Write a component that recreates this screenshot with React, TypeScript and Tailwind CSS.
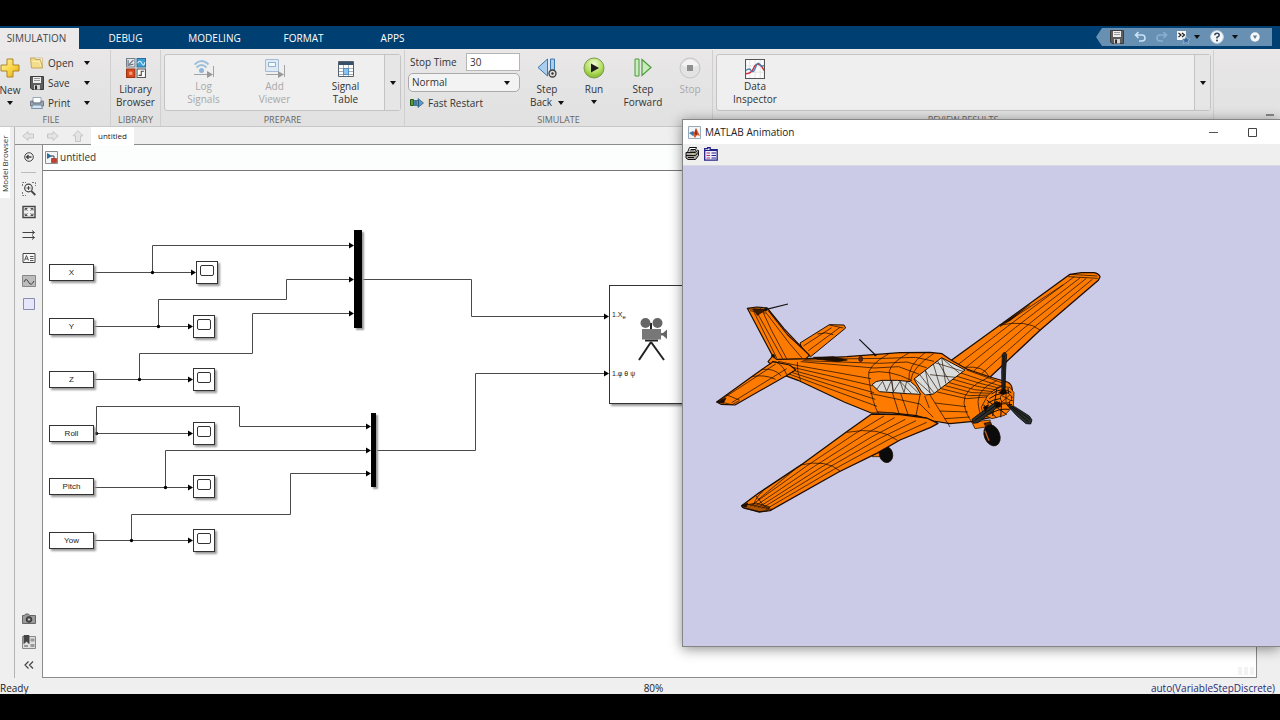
import type { ReactNode } from "react"
import { clsx } from "clsx"

type Point = [number, number]

const TABS = ["DEBUG", "MODELING", "FORMAT", "APPS"]

const SOURCES = [
  { label: "X", pos: "left-[6px] top-[93px]" },
  { label: "Y", pos: "left-[6px] top-[147px]" },
  { label: "Z", pos: "left-[6px] top-[200px]" },
  { label: "Roll", pos: "left-[6px] top-[254px]" },
  { label: "Pitch", pos: "left-[6px] top-[307px]" },
  { label: "Yow", pos: "left-[6px] top-[361px]" },
]

const SCOPES = [
  "left-[153px] top-[90px]",
  "left-[150px] top-[144px]",
  "left-[150px] top-[197px]",
  "left-[150px] top-[251px]",
  "left-[150px] top-[304px]",
  "left-[150px] top-[358px]",
]

const WIRES = [
  "M51 101.5H150",
  "M109.5 101.5V74.5H307",
  "M51 155.5H146",
  "M115.5 155.5V128.5H243.5V108.5H307",
  "M51 208.5H146",
  "M96.5 208.5V182.5H209.5V142.5H307",
  "M51 262.5H146",
  "M53.5 262.5V235.5H196.5V255.5H324",
  "M51 316.5H146",
  "M122.5 316.5V279.5H324",
  "M51 369.5H146",
  "M88.5 369.5V343.5H247.5V302.5H324",
  "M319 108.5H428.5V145.5H562",
  "M333 279.5H432.5V202.5H562",
]

const ARROWS: Point[] = [
  [153, 101.5], [150, 155.5], [150, 208.5], [150, 262.5], [150, 316.5], [150, 369.5],
  [311, 74.5], [311, 108.5], [311, 142.5],
  [328, 255.5], [328, 279.5], [328, 302.5],
  [566, 145.5], [566, 202.5],
]

const JUNCTIONS: Point[] = [
  [109.5, 101.5], [115.5, 155.5], [96.5, 208.5], [53.5, 262.5], [122.5, 316.5], [88.5, 369.5],
]

// Lines running through a series of cross sections, spread evenly between their end points.
function loft(sections: [Point, Point][], count: number) {
  let d = ""
  for (let i = 1; i <= count; i++) {
    const t = i / (count + 1)
    sections.forEach(([a, b], s) => {
      const x = Math.round(a[0] + (b[0] - a[0]) * t)
      const y = Math.round(a[1] + (b[1] - a[1]) * t)
      d += `${s === 0 ? "M" : "L"}${x} ${y}`
    })
  }
  return d
}

function Caret({ className }: { className?: string }) {
  return (
    <svg viewBox="0 0 6 4" className={clsx("h-1 w-1.5 shrink-0", className)} aria-hidden="true">
      <path d="M0 0h6L3 4z" fill="#111" />
    </svg>
  )
}

function NewIcon() {
  return (
    <svg viewBox="0 0 20 20" className="size-5" aria-hidden="true">
      <defs>
        <linearGradient id="plus" x1="0" y1="0" x2="1" y2="1">
          <stop offset="0" stopColor="#fff7a8" />
          <stop offset=".6" stopColor="#f8d23c" />
          <stop offset="1" stopColor="#dca01c" />
        </linearGradient>
      </defs>
      <path d="M7 1h6v6h6v6h-6v6H7v-6H1V7h6z" fill="url(#plus)" stroke="#b08428" />
    </svg>
  )
}

function FolderIcon() {
  return (
    <svg viewBox="0 0 14 12" className="h-3 w-3.5" aria-hidden="true">
      <path d="M4 1h8.500v9H5z" fill="#fdfdfd" stroke="#c9b780" strokeWidth=".8" />
      <path d="M.5 1h4l1 1.500H10.500l2 8.500H1.500z" fill="#f3dc8b" stroke="#b99745" strokeWidth=".8" />
      <path d="M2.500 4.500h7l1.500 5" fill="none" stroke="#fff3c0" strokeWidth=".8" />
    </svg>
  )
}

function SaveIcon() {
  return (
    <svg viewBox="0 0 14 14" className="size-3.5" aria-hidden="true">
      <path d="M.5.500h13v13H2l-1.500-1.500z" fill="#5d5d5d" stroke="#3c3c3c" />
      <path d="M3 1h8v6H3z" fill="#eee" />
      <path d="M4 2.500h6M4 4.500h6" stroke="#999" />
      <path d="M4 9h6v4.500H4z" fill="#d4d4d4" />
      <path d="M5 9.500h2v4H5z" fill="#2c2c2c" />
    </svg>
  )
}

function PrintIcon() {
  return (
    <svg viewBox="0 0 14 12" className="h-3 w-3.5" aria-hidden="true">
      <path d="M3 .5h8V6H3z" fill="#fff" stroke="#8297a8" strokeWidth=".8" />
      <path d="M.5 4.500Q.5 4 1 4h2v2h8V4h2q.5 0 .5.500V9h-13z" fill="#9aa6b2" stroke="#5d6a77" strokeWidth=".8" />
      <path d="M2.500 8h9l1 3.500h-11z" fill="#cfe4f5" stroke="#6a7d90" strokeWidth=".8" />
    </svg>
  )
}

function LibraryIcon() {
  return (
    <svg viewBox="0 0 19 19" className="size-5" aria-hidden="true">
      <path d="M.5.500h8v8h-8z" fill="#e4e7ea" stroke="#77808a" />
      <path d="M2 2v5l5-1M3 6l4-4" fill="none" stroke="#5f6c78" />
      <path d="M10.500.500h8v8h-8z" fill="#3da0d4" stroke="#2b6f98" />
      <path d="M11 5q2-4 4 0t3-1" fill="none" stroke="#d4f0ff" />
      <path d="M.5 10.500h8v8h-8z" fill="#d8491c" stroke="#9a3213" />
      <path d="M3 13h3v3H3z" fill="#f0a080" />
      <path d="M10.500 10.500h8v8h-8z" fill="#fafafa" stroke="#555" />
      <path d="M12 16.500h2.500v-4H17" fill="none" stroke="#444" />
    </svg>
  )
}

function LogSignalsIcon() {
  return (
    <svg viewBox="0 0 20 20" className="size-5" aria-hidden="true">
      <g fill="none" stroke="#9dbfdb" strokeWidth="1.800">
        <path d="M.5 5.500q7-7 14 0M2.500 8.500q5-5 10 0" />
      </g>
      <circle cx="7.500" cy="11.500" r="2.500" fill="#8fb6d8" />
      <path d="M0 15.500h14M19.500 7v11" stroke="#a3a3a3" />
      <path d="M13 12l6 3.500-6 3.500z" fill="#999" />
    </svg>
  )
}

function AddViewerIcon() {
  return (
    <svg viewBox="0 0 20 20" className="size-5" aria-hidden="true">
      <path d="M.5.500h13v12H.5z" fill="#dfeaf4" stroke="#a5bdd2" />
      <path d="M3.500 3.500h7v4h-7z" fill="#f5faff" stroke="#8fb0cf" />
      <path d="M1 15.500h13M19.500 6v12" stroke="#a3a3a3" />
      <path d="M13 12l6 3.500-6 3.500z" fill="#999" />
    </svg>
  )
}

function SignalTableIcon() {
  return (
    <svg viewBox="0 0 16 16" className="size-4" aria-hidden="true">
      <path d="M.5.500h15v15H.5z" fill="#fff" stroke="#56616b" />
      <path d="M1 1h14v3H1z" fill="#35506b" />
      <path d="M1 7.500h14M1 10.500h14M1 13.500h14M5.500 4v11M10.500 4v11" stroke="#8d9aa6" strokeWidth=".8" />
      <path d="M5.500 7.500h5v6h-5z" fill="#8cc4f0" stroke="#3f83bd" strokeWidth=".8" />
    </svg>
  )
}

function StepBackIcon() {
  return (
    <svg viewBox="0 0 20 20" className="size-5" aria-hidden="true">
      <path d="M1 9.500L10.500 1v17z" fill="#a9cdec" stroke="#3f78ac" />
      <path d="M13.500 1h4v14h-4z" fill="#a9cdec" stroke="#3f78ac" />
      <circle cx="15.500" cy="15.500" r="3.500" fill="#ddd" stroke="#3c3c3c" strokeWidth="1.300" />
      <circle cx="15.500" cy="15.500" r="1.200" fill="#333" />
    </svg>
  )
}

function RunIcon() {
  return (
    <svg viewBox="0 0 22 22" className="size-[22px]" aria-hidden="true">
      <defs>
        <radialGradient id="run" cx=".5" cy=".3" r=".7">
          <stop offset="0" stopColor="#f2fbd8" />
          <stop offset=".6" stopColor="#b5df62" />
          <stop offset="1" stopColor="#7fb52a" />
        </radialGradient>
      </defs>
      <circle cx="11" cy="11" r="10" fill="url(#run)" stroke="#7a9c4c" />
      <path d="M8 6.500l8 4.500-8 4.500z" fill="#1c1c1c" />
    </svg>
  )
}

function StepForwardIcon() {
  return (
    <svg viewBox="0 0 19 20" className="size-5" aria-hidden="true">
      <path d="M1.500 1h4v17h-4z" fill="#cdebc0" stroke="#4c9a3a" />
      <path d="M8.500 1.500L17.500 9.500l-9 8z" fill="#c9eabb" stroke="#4c9a3a" strokeWidth="1.200" />
    </svg>
  )
}

function StopIcon() {
  return (
    <svg viewBox="0 0 22 22" className="size-[22px]" aria-hidden="true">
      <circle cx="11" cy="11" r="10" fill="#e3e3e3" stroke="#c4c4c4" />
      <path d="M2.500 8q8.500-11 17 0-8 4-17 0z" fill="#f4f4f4" />
      <path d="M8 8h6v6H8z" fill="#8f8f8f" />
    </svg>
  )
}

function FastRestartIcon() {
  return (
    <svg viewBox="0 0 14 10" className="h-2.5 w-3.5" aria-hidden="true">
      <path d="M.5 1.500h3v6h-3z" fill="#5a9a3c" stroke="#2c5a1c" />
      <path d="M4 2.500h4V.5L13.500 5 8 9.500v-2H4z" fill="#5c9bc9" stroke="#3a6486" strokeWidth=".8" />
      <path d="M6 3v4M8.500 2v6" stroke="#21445f" strokeWidth=".8" />
    </svg>
  )
}

function InspectorIcon() {
  return (
    <svg viewBox="0 0 19 19" className="size-5" aria-hidden="true">
      <path d="M.5.500h18v18H.5z" fill="#fcfcfc" stroke="#555" />
      <path d="M4.500 1v17M9.500 1v17M14.500 1v17M1 6.500h17M1 12.500h17" stroke="#ddd" strokeWidth=".7" />
      <path d="M1 14q5 0 7-5t5-4 5 6" fill="none" stroke="#c8283c" strokeWidth="1.300" />
      <path d="M1 11q3-3 5 0t4-3 4-3 4 1" fill="none" stroke="#4a7fb0" strokeWidth="1.300" />
    </svg>
  )
}

function ToolButton({
  icon,
  lines,
  menu,
  disabled,
  compact,
  className,
}: {
  icon: ReactNode
  lines: string[]
  menu?: boolean
  disabled?: boolean
  compact?: boolean
  className?: string
}) {
  return (
    <button
      type="button"
      disabled={disabled}
      className={clsx(
        "flex flex-col items-center pt-[3px] text-[10px] leading-[13px]",
        disabled ? "text-[#a8a8a8]" : "text-[#333]",
        className,
      )}
    >
      <span className={clsx("flex h-[22px] items-center justify-center", !compact && "mb-1")}>{icon}</span>
      {lines.map((line, i) => (
        <span key={line} className="flex items-center gap-1.5 whitespace-nowrap">
          {line}
          {menu && i === lines.length - 1 && lines.length > 1 && <Caret />}
        </span>
      ))}
      {menu && lines.length === 1 && <Caret className="mt-1" />}
    </button>
  )
}

function Section({ label, className, children }: { label: string; className?: string; children: ReactNode }) {
  return (
    <section className={clsx("flex flex-col border-r border-[#cfcfcf]", className)}>
      <div className="flex h-[63px] shrink-0 pt-1">{children}</div>
      <p className="shrink-0 text-center text-[9px] leading-[13px] text-[#666]">{label}</p>
    </section>
  )
}

function FileRow({ icon, label }: { icon: ReactNode; label: string }) {
  return (
    <button type="button" className="flex h-5 items-center text-[10px] text-[#333]">
      <span className="flex w-[18px] items-center">{icon}</span>
      <span className="w-[36px] text-left">{label}</span>
      <Caret />
    </button>
  )
}

function TabBar() {
  return (
    <header className="flex h-[23px] items-end bg-[#003f72] text-[10px]">
      <nav aria-label="Toolstrip tabs" className="flex">
        <a href="#simulation" aria-current="page" className="mr-0.5 flex h-[21px] w-[79px] items-center justify-center bg-[#ebe9ea] pr-1.5 text-[#444]">
          SIMULATION
        </a>
        {TABS.map((tab) => (
          <a key={tab} href={`#${tab.toLowerCase()}`} className="flex h-[21px] w-[89px] items-center justify-center text-white">
            {tab}
          </a>
        ))}
      </nav>
      <div className="mr-2 mb-[3px] ml-auto flex h-[18px] w-[176px] items-center bg-[#6790b3] pl-3.5 [clip-path:polygon(6px_0,100%_0,100%_100%,6px_100%,0_50%)]">
        <button type="button" aria-label="Save" className="mr-2.5">
          <SaveIcon />
        </button>
        <button type="button" aria-label="Undo" className="mr-2.5">
          <svg viewBox="0 0 12 12" className="size-3" fill="none" stroke="#c9e2f6" strokeWidth="1.600">
            <path d="M4.500 1L1.500 4l3 3M1.500 4H8q3 0 3 3t-3 3H5" />
          </svg>
        </button>
        <button type="button" aria-label="Redo" className="mr-2">
          <svg viewBox="0 0 12 12" className="size-3" fill="none" stroke="#86b1d4" strokeWidth="1.600">
            <path d="M7.500 1l3 3-3 3M10.500 4H4Q1 4 1 7t3 3h3" />
          </svg>
        </button>
        <button type="button" aria-label="Shortcuts" className="flex items-center gap-1">
          <svg viewBox="0 0 14 14" className="size-3.5">
            <path d="M1 1h9v9H1z" fill="#f4f4f4" />
            <path d="M2.500 3L5 5 2.500 7M6 3l2.500 2L6 7" fill="none" stroke="#222" strokeWidth="1.200" />
            <path d="M10 6l1.200 2.800 2.800.200-2.200 2 .8 3-2.600-1.700L7.400 14l.8-3L6 9l2.800-.2z" fill="#38699a" stroke="#bcd6ea" strokeWidth=".5" />
          </svg>
          <Caret />
        </button>
        <button type="button" aria-label="Help" className="ml-2.5 flex items-center gap-2">
          <svg viewBox="0 0 14 14" className="size-3.5">
            <circle cx="7" cy="7" r="6.300" fill="#f6f8fa" stroke="#d0dbe6" />
            <path d="M4.800 5.200Q4.800 3.300 7 3.300t2.200 1.900Q9.200 6.300 7 7.300v1.200" fill="none" stroke="#2b4560" strokeWidth="1.500" />
            <circle cx="7" cy="10.500" r="1" fill="#2b4560" />
          </svg>
          <Caret />
        </button>
        <button type="button" aria-label="Minimize toolstrip" className="ml-3">
          <svg viewBox="0 0 10 10" className="size-2.5">
            <circle cx="5" cy="5" r="4.700" fill="#f6f8fa" />
            <path d="M2.800 3.500h4.400L5 7z" fill="#5a7c9a" />
          </svg>
        </button>
      </div>
    </header>
  )
}

function GalleryArrow() {
  return (
    <button type="button" aria-label="Show more" className="flex w-4 items-center justify-center border-l border-[#c4c4c4] bg-[#e6e6e6]">
      <Caret />
    </button>
  )
}

function Ribbon() {
  return (
    <div className="flex h-[78px] overflow-hidden border-t border-b border-t-[#f1e9e9] border-b-[#c8c8c8] bg-linear-to-b from-[#e9e7e7] to-[#e1e1e1]">
      <Section label="FILE" className="w-[111px] pr-2">
        <button type="button" className="-ml-0.5 flex w-6 flex-col items-center pt-1 text-[10px] leading-[13px] text-[#333]">
          <NewIcon />
          <span className="mt-1.5">New</span>
          <Caret className="mt-1" />
        </button>
        <div className="-mt-px ml-2">
          <FileRow icon={<FolderIcon />} label="Open" />
          <FileRow icon={<SaveIcon />} label="Save" />
          <FileRow icon={<PrintIcon />} label="Print" />
        </div>
      </Section>

      <Section label="LIBRARY" className="w-[50px]">
        <ToolButton icon={<LibraryIcon />} lines={["Library", "Browser"]} className="w-full" />
      </Section>

      <Section label="PREPARE" className="w-[244px]">
        <div className="ml-[3px] flex h-[57px] w-[237px] rounded-[3px] border border-[#c4c4c4] bg-[#efefef]">
          <div className="flex flex-1 justify-center">
            <ToolButton compact icon={<LogSignalsIcon />} lines={["Log", "Signals"]} disabled className="w-[71px]" />
            <ToolButton compact icon={<AddViewerIcon />} lines={["Add", "Viewer"]} disabled className="w-[71px]" />
            <ToolButton compact icon={<SignalTableIcon />} lines={["Signal", "Table"]} className="w-[71px]" />
          </div>
          <GalleryArrow />
        </div>
      </Section>

      <Section label="SIMULATE" className="w-[308px]">
        <div className="-mt-px ml-[3px] w-[112px] text-[10px] text-[#333]">
          <div className="flex h-[18px] items-center justify-between pl-0.5">
            <label htmlFor="stop-time">Stop Time</label>
            <input id="stop-time" defaultValue="30" className="h-[18px] w-[54px] border border-[#b5b5b5] bg-white pl-[3px]" />
          </div>
          <div className="relative mt-0.5 flex items-center">
            <select aria-label="Simulation mode" className="h-[19px] w-full appearance-none rounded-[5px] border border-[#aaa] bg-[#f3f3f3] pl-[3px]">
              <option>Normal</option>
              <option>Accelerator</option>
              <option>Rapid Accelerator</option>
            </select>
            <Caret className="pointer-events-none absolute right-2.5" />
          </div>
          <button type="button" className="flex h-[22px] items-center gap-1 pl-0.5">
            <FastRestartIcon />
            Fast Restart
          </button>
        </div>
        <div className="flex">
          <ToolButton icon={<StepBackIcon />} lines={["Step", "Back"]} menu className="w-[54px]" />
          <ToolButton icon={<RunIcon />} lines={["Run"]} menu className="w-10" />
          <ToolButton icon={<StepForwardIcon />} lines={["Step", "Forward"]} className="w-[58px]" />
          <ToolButton icon={<StopIcon />} lines={["Stop"]} disabled className="w-9" />
        </div>
      </Section>

      <Section label="REVIEW RESULTS" className="flex-1">
        <div className="mr-0.5 ml-[3px] flex h-[57px] flex-1 rounded-[3px] border border-[#c4c4c4] bg-[#efefef]">
          <div className="flex flex-1">
            <ToolButton compact icon={<InspectorIcon />} lines={["Data", "Inspector"]} className="w-[76px]" />
          </div>
          <GalleryArrow />
        </div>
      </Section>

      <div className="flex w-[66px] items-end justify-end pr-1.5 pb-2.5">
        <span className="h-0.5 w-2 bg-[#888]" />
      </div>
    </div>
  )
}

function NavArrow({ label, d }: { label: string; d: string }) {
  return (
    <button type="button" aria-label={label} disabled className="flex h-full w-[25px] items-center justify-center">
      <svg viewBox="0 0 12 12" className="size-3">
        <path d={d} fill="#e4e4e4" stroke="#c6c6c6" />
      </svg>
    </button>
  )
}

function PaletteButton({ label, children }: { label: string; children: ReactNode }) {
  return (
    <button type="button" aria-label={label} className="flex h-[23px] w-full items-center justify-center">
      <svg viewBox="0 0 14 14" className="size-3.5" fill="none" stroke="#444">
        {children}
      </svg>
    </button>
  )
}

function Palette() {
  return (
    <aside aria-label="Palette" className="flex w-[27px] flex-col pb-0.5">
      <PaletteButton label="Hide browser">
        <circle cx="7" cy="7" r="4.300" />
        <path d="M4.500 7h5M6.500 5l-2 2 2 2" strokeWidth="1.300" />
      </PaletteButton>
      <hr className="mx-1.5 my-1 border-[#bbb]" />
      <PaletteButton label="Zoom">
        <path d="M.5 4V.5H4M10 .5h3.500V4M.5 10v3.500H4" strokeDasharray="2 1" stroke="#777" />
        <circle cx="6.500" cy="6" r="3.800" strokeWidth="1.200" />
        <path d="M4.500 6h4M6.500 4v4" />
        <path d="M9.300 9l4 4" strokeWidth="1.800" />
      </PaletteButton>
      <PaletteButton label="Fit to view">
        <path d="M1 1.500h12v11H1z" strokeWidth="1.400" />
        <path d="M3 5.500V3.500h2.500M8.500 3.500H11v2M11 8.500v2H8.500M5.500 10.500H3v-2M3 3.500l2.500 2M11 3.500l-2.500 2M3 10.500l2.500-2M11 10.500l-2.500-2" strokeWidth=".9" />
      </PaletteButton>
      <PaletteButton label="Sample time">
        <path d="M.5 4.500h12M.5 9.500h12M10 2.500l2.500 2-2.500 2M10 7.500l2.500 2-2.500 2" />
      </PaletteButton>
      <PaletteButton label="Annotation">
        <path d="M1 2.500h12v9H1z" fill="#f8f8f8" />
        <path d="M2.500 9.500l2-5 2 5M3.300 8h2.500M8 5.500h3.500M8 7.500h3.500M8 9.500h3.500" strokeWidth=".9" />
      </PaletteButton>
      <PaletteButton label="Image">
        <path d="M.5 1.500h13v11H.5z" fill="#bcbcbc" stroke="#888" />
        <path d="M2 8q2-5 4.500 0T12 7" />
      </PaletteButton>
      <PaletteButton label="Area">
        <path d="M1.500 1.500h11v11h-11z" fill="#e6e6fa" stroke="#8c8cb0" />
      </PaletteButton>
      <div className="mt-auto">
        <PaletteButton label="Screenshot">
          <path d="M.5 3.500h2l1-1.500h3l1 1.500h6v8H.5z" fill="#9a9a9a" stroke="#666" />
          <circle cx="7" cy="7.500" r="2.800" fill="#555" stroke="#333" />
          <circle cx="7" cy="7.500" r="1" fill="#ddd" stroke="none" />
        </PaletteButton>
        <PaletteButton label="Bookmarks">
          <path d="M.5 1.500h13v12H.5z" fill="#e0e0e0" stroke="#888" />
          <path d="M2 .5h5v8L4.500 6 2 8.500z" fill="#444" />
          <path d="M8.500 3.500h4v3h-4zM8.500 9h4v3h-4zM2 10h4v2H2z" fill="#999" stroke="none" />
        </PaletteButton>
        <PaletteButton label="Collapse palette">
          <path d="M6.500 3.500L3 7l3.500 3.500M11 3.500L7.500 7l3.500 3.500" strokeWidth="1.200" />
        </PaletteButton>
      </div>
    </aside>
  )
}

function Camera() {
  return (
    <svg viewBox="0 0 30 44" className="h-11 w-[30px]" aria-hidden="true">
      <path d="M13 24L1 42M13 24l13 18" stroke="#222" strokeWidth="2" />
      <path d="M7 22.500h13" stroke="#222" strokeWidth="2" />
      <path d="M13 5v6" stroke="#222" strokeWidth="2" />
      <circle cx="7.500" cy="5" r="5" fill="#666" />
      <circle cx="19.500" cy="5" r="5" fill="#666" />
      <path d="M4 11h19v10.500H4z" fill="#777" />
      <path d="M23 15h2l4-3.500v9.500l-4-3.500h-2z" fill="#666" />
    </svg>
  )
}

function Diagram() {
  return (
    <div className="relative min-h-0 flex-1 overflow-hidden bg-white font-['Liberation_Sans',sans-serif] text-[8px] text-[#222]">
      <svg className="absolute inset-0 size-full" aria-hidden="true">
        <path d={WIRES.join("")} fill="none" stroke="#4a4a4a" />
        {ARROWS.map(([x, y]) => (
          <path key={`${x}-${y}`} d={`M${x} ${y}l-5-3v6z`} fill="#000" />
        ))}
        {JUNCTIONS.map(([x, y]) => (
          <circle key={`${x}-${y}`} cx={x} cy={y} r="1.700" fill="#000" />
        ))}
      </svg>
      {SOURCES.map(({ label, pos }) => (
        <div
          key={label}
          className={clsx("absolute flex h-[17px] w-[45px] items-center justify-center border border-[#333] bg-white shadow-[2px_2px_2px_#999]", pos)}
        >
          {label}
        </div>
      ))}
      {SCOPES.map((pos) => (
        <div key={pos} className={clsx("absolute h-[23px] w-[22px] border border-[#333] bg-white px-[3px] pt-[3px] shadow-[2px_2px_2px_#999]", pos)}>
          <div className="h-[11px] rounded-[2px] border border-[#333]" />
        </div>
      ))}
      <div className="absolute top-[59px] left-[311px] h-[98px] w-2 bg-black shadow-[2px_2px_2px_#999]" />
      <div className="absolute top-[242px] left-[328px] h-[74px] w-[5px] bg-black shadow-[2px_2px_2px_#999]" />
      <div className="absolute top-[114px] left-[566px] h-[119px] w-[100px] border border-[#333] bg-white shadow-[2px_2px_2px_#999]">
        <span className="absolute top-6 left-0.5 text-[7px]">
          1.X<sub className="text-[6px]">e</sub>
        </span>
        <span className="absolute top-[83px] left-0.5 text-[7px]">1.φ θ ψ</span>
        <div className="absolute top-8 left-7">
          <Camera />
        </div>
      </div>
      <div className="absolute right-0.5 bottom-0.5 flex gap-0.5">
        <span className="h-2 w-1 bg-[#f3f3f3]" />
        <span className="h-2 w-1 bg-[#f3f3f3]" />
        <span className="h-2 w-1 bg-[#f3f3f3]" />
      </div>
    </div>
  )
}

const FAR_WING: [Point, Point][] = [
  [[752, 304], [868, 350]],
  [[899, 196], [1020, 210]],
  [[1105, 48], [1195, 60]],
]

const NEAR_WING: [Point, Point][] = [
  [[520, 463], [712, 492]],
  [[440, 517], [592, 542]],
  [[300, 615], [420, 632]],
  [[140, 735], [208, 750]],
]

function Aircraft() {
  return (
    <svg viewBox="30 15 1200 780" className="block h-[260px] w-[400px]" role="img" aria-label="Aircraft model">
      <g fill="#ff7b00" stroke="#1c0d00" strokeWidth="2.200" strokeLinejoin="round">
        {/* far wing and tailplane */}
        <path d="M750 304L1110 43l34-5h38q14 2 18 12l-5 11-175 150-152 142-44-14z" strokeWidth="4" />
        <path d={loft(FAR_WING, 4)} fill="none" />
        <path d="M896 196q86-18 124 14M792 322q60-6 74 26M1110 43l82 5M1105 50l88 5M900 200l190-126" fill="none" />
        <path d="M900 196l90-62-60 48z" fill="#1c0d00" strokeWidth="1" />
        <path d="M300 249l88-55 44 1 5 9-105 86-22-12z" strokeWidth="3" />
        <path d="M310 258l85-55M325 272l95-70M352 222q26-8 48 2M388 195l42 9" fill="none" />

        {/* landing gear */}
        <path d="M520 572l-3 18h25l6-30z" />
        <ellipse cx="558" cy="583" rx="20" ry="25" fill="#0b0b0b" transform="rotate(-15 558 583)" />
        <path d="M815 486l10 20 40-6 6-20z" />
        <path d="M852 490l14 26 14-6-8-24z" fill="#5a2a00" />
        <ellipse cx="876" cy="526" rx="23" ry="33" fill="#0b0b0b" transform="rotate(-22 876 526)" />
        <path d="M855 512l12 30" stroke="#c2611a" strokeWidth="4" />

        {/* fuselage */}
        <path
          d="M218 288l12 8h90l120-6 80-6 80-6 90-1 36 4 26 18 48 28 70 24 52 15q14 6 15 24l-2 40q-6 24-35 36l-80 18-70 7-50-8-50-16-70-8h-66l-80-32-140-66-54-20-36-36z"
          strokeWidth="3.500"
        />
        <path d={loft([[[228, 296], [262, 346]], [[292, 308], [302, 363]], [[508, 335], [535, 460]]], 5)} fill="none" />
        <path d={loft([[[320, 295], [296, 308]], [[572, 281], [506, 338]], [[672, 278], [570, 334]], [[724, 284], [636, 362]]], 3)} fill="none" />
        <path d="M292 306q-2 30 10 56M568 280Q498 320 506 350q10 80 30 112M628 278q-56 30-60 56l8 60 22 70M675 278q-54 40-48 84M702 280q-66 42-70 82M506 338q60-12 130 24" fill="none" />
        <path d="M340 292l60-2 42 10-30 5-62-8z" fill="#1c0d00" />
        <path d="M510 400l150 32 40 40M600 395l24 68M660 405l-12 62M674 408l14 36M690 405l60 96M530 455q100 4 180 36" fill="none" />
        <path d={loft([[[795, 330], [700, 405]], [[856, 352], [792, 425]], [[918, 376], [860, 415]]], 7)} fill="none" />
        <path d={loft([[[690, 405], [748, 500]], [[792, 425], [815, 486]]], 3)} fill="none" />
        <path d="M866 352q-78 34-74 78 6 36 24 56M890 362q-54 22-56 62 2 34 14 52M915 372q-50 20-52 52l8 38M800 330q50 18 110 40" fill="none" />

        {/* fin */}
        <path d="M142 145l28-4 32 3 8 10 42 52 76 80-10 10-88 2-12-10z" strokeWidth="3.500" />
        <path d="M205 152l60 76 66 60-72-68z" fill="#1c0d00" />
        <path d="M158 148l72 146M168 152l80 144M186 150l28 60 46 86M192 150l76 100 38 44M142 146l60 6M178 142l18 20M150 152l20 4" fill="none" />
        <path d="M160 146l12 20 28-18z" fill="#3c1b00" />

        {/* near tailplane */}
        <path d="M50 426l105-76 64-45 50 10 18 14-28 18-154 88-42-2z" strokeWidth="3.500" />
        <path d="M52 424l44 10 22-12M78 404l40 16M62 420l165-108M95 428l165-102M155 350q36-8 72 8M186 328q38-4 58 20M216 304q30 2 44 40" fill="none" />
        <path d="M50 426l28-12-8 16z" fill="#1c0d00" />

        {/* near wing */}
        <path d="M125 737l50-37 125-83 140-102 75-53 85 2 80 10 34 16-22 12-92 38-70 40-114 56-206 116-32 4-50-14z" strokeWidth="4" />
        <path d={loft(NEAR_WING, 5)} fill="none" />
        <path d="M440 517q100-18 152 24M300 615q80-18 120 18M140 732l76 16M168 708q20 30 44 44M190 694q-20 12-30 42M285 628l-112 92" fill="none" />
        <path d="M125 737l44-8 40 12-8 12-24 2-46-10z" fill="#4a2200" fillOpacity=".45" />
        <path d="M125 737l18-8-4 12z" fill="#1c0d00" />

        {/* glazing */}
        <g fill="#dadcdc">
          <path d="M516 374q10-12 30-13h46l40 4 16 14 14 24-40-2-84-6z" strokeWidth="3" />
          <path d="M530 388l18-24 12 30 14-32 6 34 20-32 12 34 8-34 34 34M576 362l4 34M600 364l34 36" fill="none" strokeWidth="2" />
          <path d="M642 357l83-64 70 37-95 72-24 3-12-12z" strokeWidth="3" />
          <path d="M645 358l50 44M660 345l42 54M676 330l14 70M676 332l38 58M700 312l22 74M712 302l36 62M725 294l12 76M725 294l54 46M690 344l76 8M705 308l84 26" fill="none" strokeWidth="2" />
        </g>

        {/* nose and propeller */}
        <path d="M880 392l24-12 26 2 12 16-2 40-26 28-38 10-26-12-6-22 18-34z" />
        <path d="M874 402q34-24 60-4M868 416q36-28 70-4M862 430q36-24 76-8M856 448q40-24 80-14M866 464q30-20 62-16M890 388l-12 80M908 382l-6 90M924 384l6 62M850 434l40 40M860 420l60 44" fill="none" strokeWidth="3" />
        <ellipse cx="918" cy="414" rx="17" ry="15" />
        <path d="M904 406l28 16M908 424l22-20M918 400v28" fill="none" />
        <g fill="#2b2f2d" stroke="#000">
          <path d="M907 283l5-6 8 5-3 50-2 64h-9l-1-60z" />
          <path d="M816 478l18-14 56-40 12 8-22 20-46 36-14 2z" />
          <path d="M920 434l24 6 44 28 8 12-4 12-14-1-28-24z" />
          <path d="M824 482l66-48M930 440l56 46M936 440l54 38M912 284v106" fill="none" />
        </g>
        <path d="M896 398l16-12 10 12-12 6zM884 430l16-4 2 14-14 4zM850 442l16-8-10 22z" fill="#120800" />
      </g>
      <g stroke="#111" strokeWidth="3.500" fill="none">
        <path d="M196 149l68-17M478 238l48 47M214 288h12" />
      </g>
      <circle cx="198" cy="147" r="5" fill="#111" />
      <circle cx="219" cy="287" r="5" fill="#111" />
      <circle cx="526" cy="285" r="4" fill="#111" />
      <ellipse cx="482" cy="297" rx="6" ry="8" fill="#6b2413" stroke="#111" strokeWidth="2" />
    </svg>
  )
}

function AnimationWindow() {
  return (
    <section
      aria-label="MATLAB Animation"
      className="absolute top-[119px] right-0 left-[682px] flex h-[528px] flex-col border-t border-b border-l border-[#858585] bg-white shadow-[0_2px_12px_rgba(0,0,0,0.45)]"
    >
      <div className="flex h-6 items-center pr-[23px] pl-[5px]">
        <svg viewBox="0 0 13 13" className="size-[13px]" aria-hidden="true">
          <path d="M.5.500h12v12H.5z" fill="#f3f6f9" stroke="#9aa9b8" />
          <path d="M1 7l4-2 2 2-2 3z" fill="#3a76a8" />
          <path d="M5 9l3-7 4 8-3-1-2 3z" fill="#d9541e" />
          <path d="M8 2l-1 6 2 1z" fill="#8a1f10" />
        </svg>
        <h2 className="ml-1 text-[10px] text-[#222]">MATLAB Animation</h2>
        <button type="button" aria-label="Minimize" className="mr-[30px] ml-auto">
          <svg viewBox="0 0 9 9" className="size-[9px]">
            <path d="M0 4.500h9" stroke="#555" />
          </svg>
        </button>
        <button type="button" aria-label="Maximize">
          <svg viewBox="0 0 9 9" className="size-[9px]">
            <path d="M.5.500h8v8h-8z" fill="none" stroke="#444" />
          </svg>
        </button>
      </div>
      <div className="flex h-[22px] items-center gap-1 border-b border-[#d8d8e0] bg-[#efefef] pb-0.5 pl-0.5">
        <button type="button" aria-label="Print">
          <svg viewBox="0 0 14 14" className="size-3.5">
            <path d="M4.500.500h7l-2 5h-7z" fill="#fff" stroke="#111" />
            <path d="M1 5.500h9.500l2-2.500 1 .5v5l-3 4H3L1 11z" fill="#a8a8a0" stroke="#111" />
            <path d="M1 8.500h9.500l2.500-3M5.500 2.500H10M4.500 4h4.500M3 10.500h6" fill="none" stroke="#111" />
            <path d="M7 7h2" stroke="#e8e04a" />
          </svg>
        </button>
        <button type="button" aria-label="Properties" className="ml-px">
          <svg viewBox="0 0 14 14" className="size-3.5">
            <path d="M.7 1.700h3V.7h2.500v2h7v10.500H.7z" fill="#eef" stroke="#232388" strokeWidth="1.300" />
            <path d="M1 3.500h12" stroke="#232388" />
            <path d="M2.500 6h3.500M2.500 8.500h3.500M2.500 11h3.500" stroke="#b03050" />
            <path d="M7.500 6H12M7.500 8.500H12M7.500 11H12" stroke="#232388" />
          </svg>
        </button>
      </div>
      <div className="flex-1 overflow-hidden bg-[#cccbe7] pt-[99px] pl-[27px]">
        <Aircraft />
      </div>
    </section>
  )
}

export default function App() {
  return (
    <div className="relative flex min-h-screen flex-col overflow-hidden bg-black py-[26px] font-['Open_Sans',sans-serif]">
      <TabBar />
      <Ribbon />
      <main className="flex flex-1 bg-[#efefef]">
        <div className="w-[15px] shrink-0 border-r border-[#b4b4b4]">
          <button
            type="button"
            className="flex h-[71px] w-2.5 rotate-180 items-center bg-white pt-1.5 text-[8px] leading-[10px] whitespace-nowrap text-[#333] [writing-mode:vertical-rl]"
          >
            Model Browser
          </button>
        </div>
        <div className="flex min-w-0 flex-1 flex-col">
          <div className="flex h-[18px] border-b border-[#8c8c8c]">
            <NavArrow label="Back" d="M6 1.500v2.500h5.500v4H6v2.500L.8 6z" />
            <NavArrow label="Forward" d="M6 1.500v2.500H.5v4H6v2.500L11.200 6z" />
            <NavArrow label="Up" d="M6 .8l5 5H8.500v5.700h-5V5.800H1z" />
            <a href="#untitled" className="-mb-px ml-px flex w-[43px] items-center justify-center bg-white text-[8px] text-[#222]">
              untitled
            </a>
          </div>
          <div className="flex flex-1 pr-[23px]">
            <Palette />
            <div className="flex min-w-0 flex-1 flex-col border-r border-b border-l border-[#8c8c8c]">
              <div className="flex h-[26px] items-center gap-0.5 border-b border-[#777] bg-[#fcfefe] pl-0.5 text-[10px] text-[#333]">
                <svg viewBox="0 0 13 13" className="size-[13px]" aria-hidden="true">
                  <path d="M.5.500h12v12H.5z" fill="#f2f4f6" stroke="#8d8d8d" />
                  <path d="M2 2l5 3-5 3z" fill="#2d6d9c" />
                  <path d="M6 5h3v3" fill="none" stroke="#444" />
                  <path d="M6.500 7.500h5v4h-5z" fill="#c8402c" stroke="#8a2418" strokeWidth=".6" />
                </svg>
                untitled
              </div>
              <Diagram />
            </div>
          </div>
        </div>
      </main>
      <footer className="flex h-4 bg-[#efefef] pt-1 pr-[5px] text-[10px] leading-3 text-[#222]">
        <span className="flex-1">Ready</span>
        <span className="ml-8 text-center">80%</span>
        <a href="#solver" className="flex-1 text-right text-[#2b2a72]">
          auto(VariableStepDiscrete)
        </a>
      </footer>
      <AnimationWindow />
    </div>
  )
}
